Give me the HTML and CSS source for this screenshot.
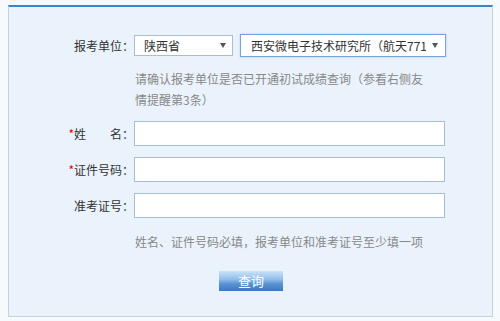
FILE: index.html
```html
<!DOCTYPE html>
<html lang="zh-CN">
<head>
  <meta charset="UTF-8">
  <title>初试成绩查询</title>
  <link rel="stylesheet" href="styles.css">
</head>
<body>

  <div class="panel">
    <form class="query-form">
      <div class="row">
        <label class="label">报考单位：</label>
        <span class="select-wrap">
          <select class="select select-prov">
            <option>陕西省</option>
          </select>
        </span>
        <span class="select-wrap select-wrap-unit">
          <select class="select select-unit">
            <option>西安微电子技术研究所（航天771所）</option>
          </select>
        </span>
      </div>
      <p class="hint">请确认报考单位是否已开通初试成绩查询（参看右侧友情提醒第3条）</p>

      <div class="row row-input">
        <label class="label"><span class="req">*</span>姓　　名：</label>
        <input type="text" class="text-input">
      </div>
      <div class="row row-input">
        <label class="label"><span class="req">*</span>证件号码：</label>
        <input type="text" class="text-input">
      </div>
      <div class="row row-input">
        <label class="label">准考证号：</label>
        <input type="text" class="text-input">
      </div>

      <p class="note">姓名、证件号码必填，报考单位和准考证号至少填一项</p>
      <button type="button" class="btn-query">查询</button>
    </form>
  </div>

</body>
</html>
```

FILE: styles.css
```css
* { box-sizing: border-box; }
body { margin: 0; background: #f7fafd; font: 12px "Noto Sans CJK SC", sans-serif; color: #333; }

.panel { margin: 5px 0 0 8px; width: 485px; height: 312px; background: #eaf3fc; border: 1px solid #c3d3e3; border-top: 2px solid #3b86c8; padding-top: 27px; }

.row { display: flex; align-items: center; height: 23px; }
.row-input { height: 25px; margin-top: 11px; }
.label { width: 125px; text-align: right; line-height: 16px; }
.req { color: #e00; }

.select-wrap { position: relative; display: inline-block; }
.select-wrap::after { content: ""; position: absolute; right: 7px; top: 8px; border-left: 3.5px solid transparent; border-right: 3.5px solid transparent; border-top: 5px solid #555; pointer-events: none; }
.select { appearance: none; -webkit-appearance: none; display: block; background: #fff; font: 12px "Noto Sans CJK SC", sans-serif; color: #333; outline: none; }
.select-prov { width: 99px; height: 21px; border: 1px solid #a9bdd3; padding: 0 20px 0 9px; }
.select-wrap-unit { margin-left: 7px; }
.select-wrap-unit::after { right: 8px; top: 9px; }
.select-unit { width: 206px; height: 23px; border: 1px solid #77a4dc; box-shadow: 0 0 2px #a8c9ee; padding: 0 19px 0 10px; }

.hint { margin: 11px 0 0 126px; width: 296px; line-height: 21px; color: #888; }

.text-input { width: 311px; height: 25px; border: 1px solid #a6bfd7; background: #fff; outline: none; }

.note { margin: 14px 0 0 126px; line-height: 20px; color: #888; }

.btn-query { display: block; margin: 19px 0 0 210px; width: 64px; height: 20px; padding: 0; border: none; background: linear-gradient(#cae2f7, #94c0ea 40%, #5893d4 65%, #3b78c2); color: #fff; font: 13px "Noto Sans CJK SC", sans-serif; line-height: 20px; }
```
